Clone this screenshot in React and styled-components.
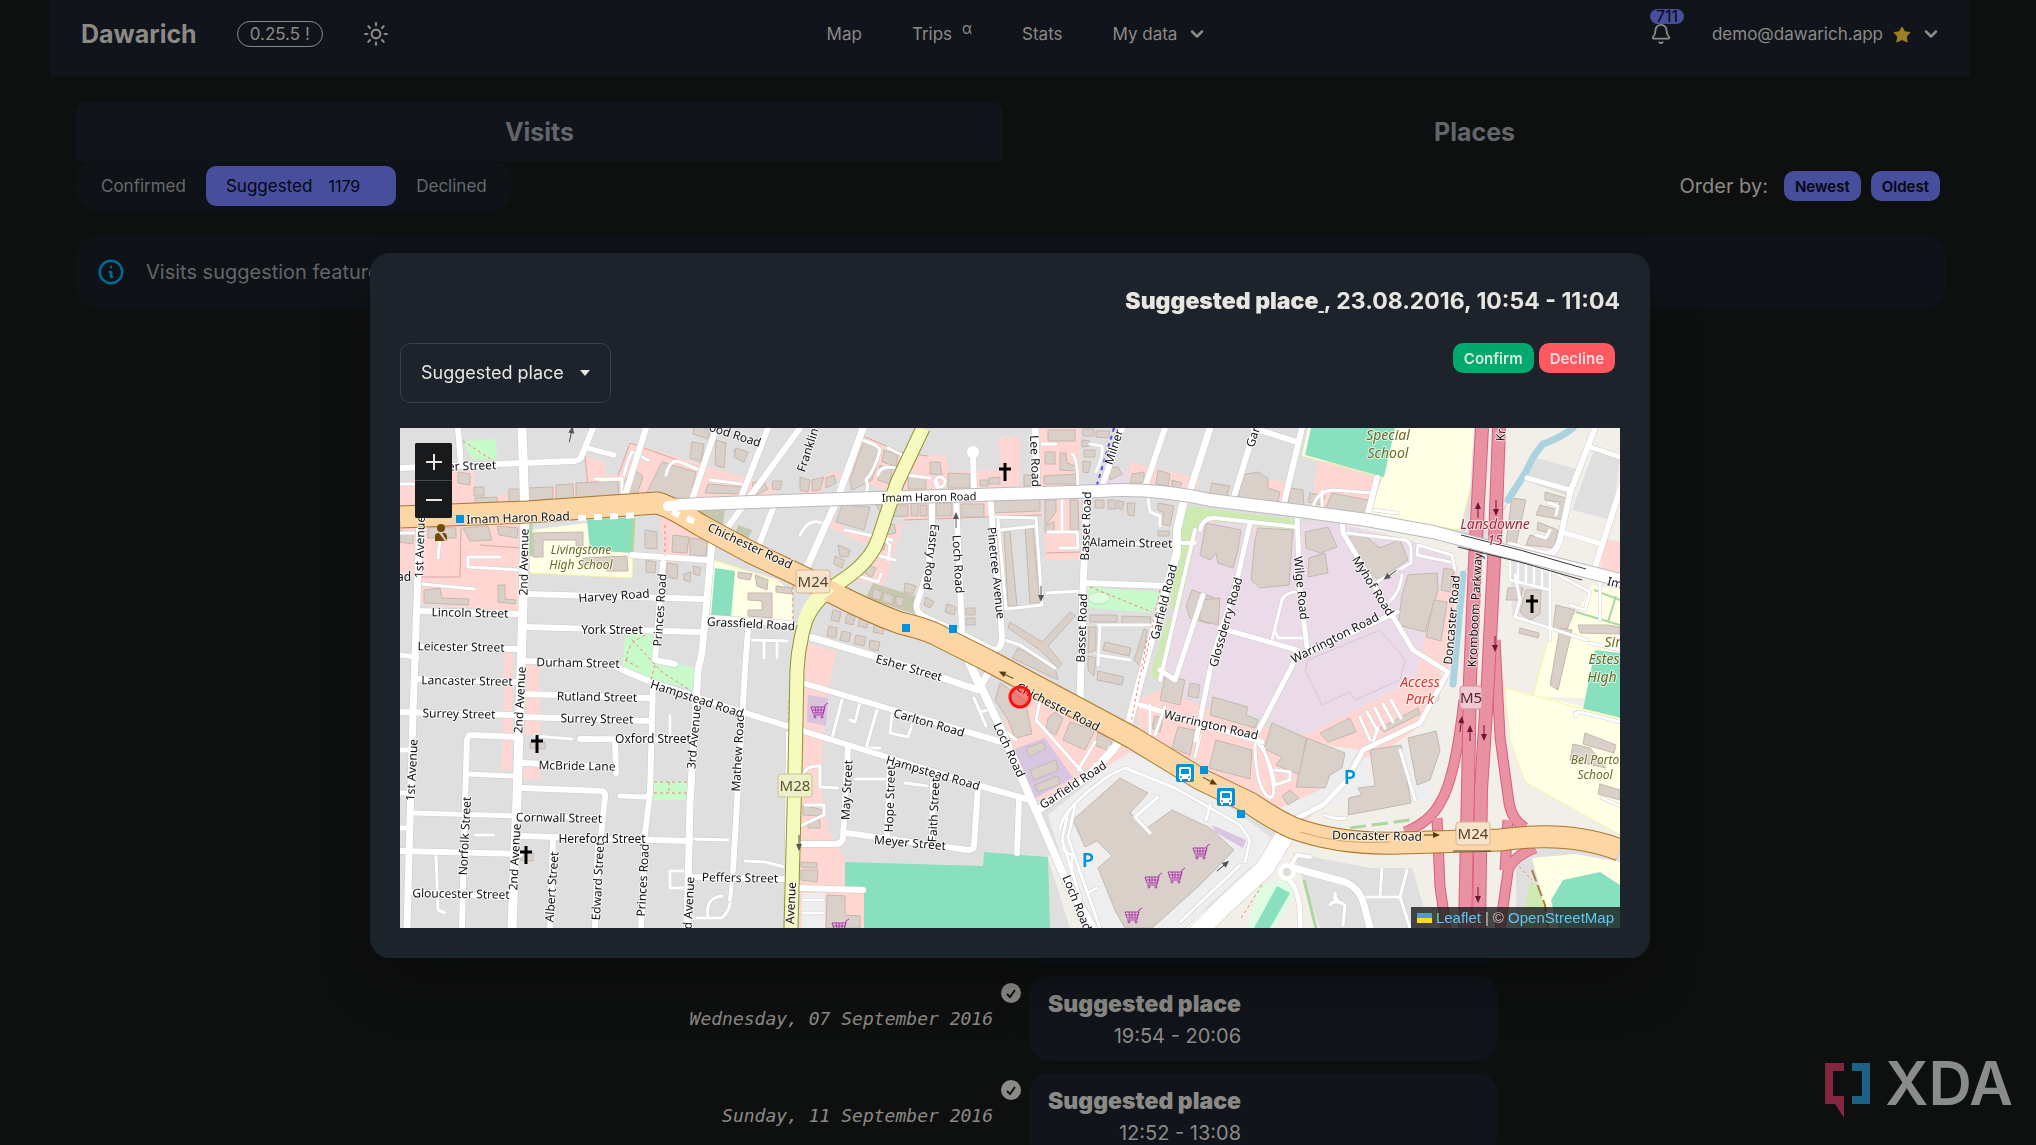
import React from "react";
import styled, { createGlobalStyle } from "styled-components";
import { ChevronDown, Bell, Sun } from "lucide-react";

const GlobalStyle = createGlobalStyle`
  * { box-sizing: border-box; }
  html, body { margin: 0; height: 100%; }
  body {
    background: #0e100f;
    color: #8c8a86;
    font-family: Inter, "Liberation Sans", sans-serif;
    font-size: 20px;
    line-height: 28px;
    overflow: hidden;
  }
  #root { height: 100%; }
  a { color: inherit; text-decoration: none; }
  button, select { font: inherit; color: inherit; border: 0; background: none; padding: 0; margin: 0; }
  ul { list-style: none; margin: 0; padding: 0; }
  h1, h2, h3, p { margin: 0; font-weight: inherit; font-size: inherit; }
`;

/* ---------- page frame ---------- */

const Page = styled.div`
  height: 100%;
  overflow: hidden;
  padding: 0 66px 0 50px;
`;

const Navbar = styled.header`
  display: grid;
  grid-template-columns: 1fr auto 1fr;
  align-items: start;
  height: 76px;
  padding: 19px 29px 0 31px;
  background: #11141a;
  font-size: 17px;
`;

const NavGroup = styled.div`
  display: flex;
  align-items: center;
  gap: ${(p) => p.$gap}px;
  height: 30px;
  justify-content: ${(p) => p.$justify || "flex-start"};
`;

const NavCenter = styled(NavGroup)`
  padding-left: 12px;
`;

const Brand = styled.a`
  font-size: 25px;
  font-weight: 700;
`;

const Version = styled.a`
  display: flex;
  align-items: center;
  height: 26px;
  padding: 0 12px;
  border: 1px solid #8c8a86;
  border-radius: 13px;
`;

const IconButton = styled.button`
  position: relative;
  display: flex;
  cursor: pointer;
`;

const NavLink = styled.a`
  display: flex;
  gap: 10px;
`;

const Alpha = styled.sup`
  font-size: 15px;
  line-height: 18px;
`;

const NavMenuButton = styled.button`
  display: flex;
  align-items: center;
  gap: 10px;
  cursor: pointer;
`;

const Count = styled.span`
  position: absolute;
  left: 0;
  top: -14px;
  padding: 0 6px;
  height: 15px;
  border-radius: 8px;
  background: #474e9c;
  color: #05060f;
  font-size: 16px;
  line-height: 15px;
`;

const Content = styled.main`
  padding: 26px 24px 0 26px;
`;

const Tabs = styled.nav`
  display: grid;
  grid-template-columns: 927fr 943fr;
  height: 59px;
`;

const Tab = styled.a`
  display: flex;
  align-items: center;
  justify-content: center;
  border-radius: 10px 10px 0 0;
  background: ${(p) => (p.$active ? "#11141a" : "transparent")};
  color: #62666b;
  font-size: 25px;
  font-weight: 700;
  line-height: 28px;
`;

const Toolbar = styled.div`
  display: flex;
  justify-content: space-between;
  align-items: center;
  height: 50px;
  padding-right: 6px;
`;

const Filter = styled.ul`
  display: flex;
  padding: 5px;
  border-radius: 20px;
  background: #0f1216;
`;

const FilterLink = styled.a`
  display: flex;
  align-items: center;
  height: 40px;
  padding: 0 20px;
  border-radius: 10px;
  background: ${(p) => (p.$active ? "#474e9c" : "transparent")};
  color: ${(p) => (p.$active ? "#05060f" : "#666a6e")};
  font-size: 17px;
`;

const FilterCount = styled.span`
  padding: 0 16px;
  font-size: 16px;
`;

const Order = styled.div`
  display: flex;
  align-items: center;
  gap: 10px;
`;

const OrderLabel = styled.span`
  padding-right: 6px;
`;

const SmallButton = styled.button`
  height: 30px;
  padding: 0 11px;
  border-radius: 10px;
  background: ${(p) => p.$bg};
  color: ${(p) => p.$fg};
  font-size: 15px;
  font-weight: 600;
  line-height: 32px;
  cursor: pointer;
`;

const Notice = styled.section`
  display: flex;
  align-items: center;
  gap: 20px;
  height: 72px;
  margin-top: 25px;
  padding: 0 20px;
  border-radius: 20px;
  background: #0f1216;
  color: #62666b;
`;

/* ---------- timeline behind the dialog ---------- */

const Timeline = styled.ul`
  display: grid;
  gap: 12px;
  margin-top: 571px;
`;

const Visit = styled.li`
  display: grid;
  grid-template-columns: 1fr 36px 1fr;
  grid-template-rows: 85px;
`;

const VisitDate = styled.time`
  align-self: center;
  text-align: right;
  font: italic 18px/24px "DejaVu Sans Mono", monospace;
`;

const VisitRail = styled.div`
  display: flex;
  flex-direction: column;
  align-items: center;
  gap: 6px;
  padding-top: 7px;
  &::after {
    content: "";
    width: 4px;
    flex: 1;
    background: #0d1014;
  }
`;

const VisitCard = styled.article`
  display: flex;
  width: 468px;
  padding: 13px 19px 8px;
  border-radius: 20px;
  background: #11141a;
  text-align: right;
  line-height: 34px;
`;

const VisitName = styled.h3`
  font-size: 23px;
  font-weight: 900;
  line-height: 30px;
`;

/* ---------- dialog ---------- */

const Overlay = styled.div`
  position: fixed;
  inset: 0;
  display: flex;
  justify-content: center;
  align-items: flex-start;
  padding: 253px 16px 0 0;
`;

const Dialog = styled.section`
  width: 1280px;
  max-width: 92vw;
  padding: 30px;
  border-radius: 20px;
  background: #1d232a;
  color: #e8e6e1;
  box-shadow: 0 30px 60px -15px rgba(0, 0, 0, 0.4);
`;

const DialogTitle = styled.h2`
  text-align: right;
  font-size: 23px;
  font-weight: 700;
  line-height: 36px;
`;

const PlaceName = styled.strong`
  font-weight: 900;
`;

const PlaceLink = styled.a`
  text-decoration: underline;
`;

const DialogTools = styled.div`
  display: flex;
  justify-content: space-between;
  align-items: flex-start;
  margin: 24px 0 25px;
`;

const SelectBox = styled.label`
  position: relative;
  display: flex;
  align-items: center;
`;

const PlaceSelect = styled.select`
  appearance: none;
  height: 60px;
  width: 211px;
  padding: 0 40px 0 20px;
  border: 1px solid #383f47;
  border-radius: 10px;
  font-size: 18px;
`;

const Caret = styled.svg`
  position: absolute;
  right: 21px;
  pointer-events: none;
`;

const Actions = styled.div`
  display: flex;
  gap: 5px;
  padding-right: 5px;
`;

const MapFrame = styled.div`
  position: relative;
  height: 500px;
  overflow: hidden;
  background: #e0dfdf;
`;

const MapCanvas = styled.svg`
  display: block;
  width: 100%;
  height: 100%;
  font-family: "Noto Sans", "Open Sans", sans-serif;
`;

const ZoomControl = styled.div`
  position: absolute;
  left: 15px;
  top: 15px;
  display: grid;
  gap: 1px;
  width: 37px;
  border-radius: 2px;
  overflow: hidden;
  background: #45474a;
`;

const ZoomButton = styled.button`
  display: flex;
  align-items: center;
  justify-content: center;
  height: 37px;
  background: #181a1c;
  cursor: pointer;
`;

const Attribution = styled.div`
  position: absolute;
  right: 0;
  bottom: 0;
  display: flex;
  align-items: center;
  gap: 4px;
  height: 21px;
  padding: 0 6px;
  background: rgba(24, 26, 27, 0.8);
  color: #c8c3bc;
  font: 15px/21px "Liberation Sans", sans-serif;
  a { color: #5cc8f5; }
`;

const Watermark = styled.div`
  position: fixed;
  right: 23px;
  bottom: 20px;
  display: flex;
  align-items: flex-start;
  gap: 14px;
  height: 62px;
  color: #8a8c8b;
  font-size: 60px;
  font-weight: 600;
  line-height: 41px;
`;

/* ---------- map data ---------- */

const areas = [
  ["#f2efe9", "1330,520 1490,550 1475,428 1620,428 1620,928 1070,928 1047,855 1100,858 1160,928 1290,822 1440,700 1440,560"],
  ["#e0dfdf", "1537,458 1580,470 1572,498 1525,480"],
  ["#e0dfdf", "1594,450 1620,458 1612,520 1572,510"],
  ["#e0dfdf", "1293,853 1370,868 1412,868 1430,928 1320,928"],
  ["#e0dfdf", "1516,850 1620,845 1620,928 1516,928"],
  // retail
  ["#ffd6d1", "400,484 454,470 474,472 474,500 530,490 528,510 400,518"],
  ["#ffd6d1", "400,522 527,518 520,612 422,604 418,577 400,575"],
  ["#ffd6d1", "526,488 588,484 585,456 604,462 606,474 618,476 630,443 780,488 760,505 526,512"],
  ["#ffd6d1", "700,470 745,484 738,500 695,500"],
  ["#ffd6d1", "863,436 900,452 928,456 946,456 948,472 1000,470 999,437 1020,437 1020,486 1035,486 1039,428 1080,428 1080,488 900,496 830,470 820,496 800,492 802,482 824,475 845,480"],
  ["#ffd6d1", "830,520 875,540 905,520 900,505 1040,496 1042,515 904,520 884,586 850,580 868,545 830,528"],
  ["#ffd6d1", "1044,498 1080,498 1080,560 1045,560"],
  ["#ffd6d1", "1130,462 1180,474 1200,480 1195,496 1128,488"],
  ["#ffd6d1", "1260,478 1285,482 1280,508 1255,500"],
  ["#ffd6d1", "1318,460 1375,477 1368,515 1310,508"],
  ["#ffd6d1", "660,516 700,530 710,540 705,562 664,556"],
  ["#ffd6d1", "505,650 513,650 511,770 502,770"],
  ["#ffd6d1", "527,664 539,666 540,735 525,735"],
  ["#ffd6d1", "524,767 541,768 540,779 523,779"],
  ["#ffd6d1", "805,642 836,652 826,700 820,780 828,830 845,858 845,890 865,890 865,928 800,928 800,640"],
  ["#ffd6d1", "1000,700 1020,680 1135,750 1100,775 1050,800 1035,800 1010,740"],
  ["#ffd6d1", "1137,700 1160,690 1255,725 1300,735 1420,672 1450,676 1415,730 1350,775 1298,830 1140,745"],
  ["#ffd6d1", "1438,570 1458,567 1450,670 1415,680"],
  ["#ffd6d1", "1603,538 1620,542 1620,575 1600,572"],
  // industrial
  ["#ebdbe8", "1200,518 1345,525 1410,540 1455,560 1435,600 1415,680 1307,735 1262,717 1160,690 1187,560"],
  ["#ebdbe8", "1112,465 1128,470 1124,488 1108,486"],
  ["#d8c5e2", "1012,750 1045,738 1073,778 1032,800"],
  ["#d9c3dd", "808,695 828,698 826,726 807,722"],
  // grass
  ["#cdebb0", "1182,505 1297,520 1297,530 1200,520 1180,610 1170,610 1177,545"],
  ["#cdebb0", "1168,618 1178,618 1158,682 1150,675"],
  ["#cdebb0", "1531,880 1545,900 1548,928 1520,928"],
  ["#c5c8ae", "688,510 725,508 723,524 704,520"],
  ["#c5c8ae", "738,525 752,530 746,543 734,538"],
  ["#c5c8ae", "873,583 915,596 917,615 866,598"],
  ["#c8facc", "463,441 496,439 497,460 472,459"],
  ["#c8facc", "625,636 652,632 655,660 695,668 692,690 622,670"],
  ["#c8facc", "653,781 688,781 688,800 653,800"],
  ["#c8facc", "1087,587 1162,592 1152,613 1088,608"],
  ["#dffce2", "1258,885 1285,880 1295,890 1275,928 1248,928"],
  // schools
  ["#ffffe5", "530,530 635,517 632,578 530,573"],
  ["#ffffe5", "713,560 778,580 792,594 793,622 710,616"],
  ["#ffffe5", "1308,428 1474,428 1470,490 1460,530 1370,515 1383,475 1302,456"],
  ["#ffffe5", "1592,585 1620,590 1620,700 1533,696 1552,625 1578,612"],
  ["#ffffe5", "1505,688 1620,715 1620,835 1525,782 1510,740"],
  ["#ffffe5", "1532,858 1575,854 1620,862 1620,928 1550,928"],
  // pitches
  ["#88e0be", "587,520 635,517 631,553 590,550"],
  ["#88e0be", "715,568 735,571 731,618 711,616"],
  ["#88e0be", "1311,428 1395,428 1384,477 1305,455"],
  ["#88e0be", "1595,650 1620,653 1620,718 1583,709"],
  ["#88e0be", "1563,880 1600,872 1620,885 1620,928 1558,928 1551,900"],
  ["#88e0be", "845,862 983,866 984,852 1048,857 1050,928 864,928 864,893 845,889"],
  ["#88e0be", "1277,886 1290,893 1270,928 1254,928"],
  // parking
  ["#eeeeee", "1048,815 1110,765 1130,752 1200,785 1250,822 1272,838 1245,873 1180,928 1095,928 1065,870"],
  ["#eeeeee", "1326,745 1360,750 1345,800 1280,820 1275,810 1320,790"],
  ["#eeeeee", "1345,805 1430,800 1446,728 1420,732 1400,745 1360,760"],
  ["#eeeeee", "802,893 825,893 825,928 802,928"],
  ["#e3e3e3", "1510,552 1550,575 1550,628 1512,615"],
  ["#d8c5e2", "1212,825 1246,840 1243,848 1215,832"],
];

const buildings = [
  "458,472 470,474 470,485 458,483", "474,487 484,487 484,496 474,496", "475,498 497,497 498,508 475,508",
  "509,489 521,489 521,505 509,505", "527,488 553,487 553,498 540,500 538,505 527,505", "556,485 573,484 574,503 556,503",
  "576,483 618,481 619,499 576,502", "625,480 634,470 643,476 638,492 626,492",
  "662,462 696,472 690,498 644,498", "694,425 710,430 708,439 693,434", "692,442 704,444 701,462 690,458",
  "716,440 726,443 724,468 715,465", "736,448 748,452 744,462 734,457",
  "708,484 742,487 743,494 705,493", "752,483 762,479 768,489 756,495", "773,481 782,481 780,490 772,489",
  "800,477 810,480 808,492 800,490", "812,480 824,477 820,490 812,491", "826,478 834,475 836,483 826,488",
  "463,528 488,526 492,540 470,541", "428,527 456,528 456,538 428,538", "497,526 518,528 517,538 499,535",
  "400,530 413,535 413,544 400,542", "424,590 440,588 442,598 469,599 468,605 424,603", "498,585 505,585 505,599 516,600 515,604 498,602",
  "533,533 583,532 583,546 576,546 576,540 543,540 543,557 533,557", "583,558 627,556 628,571 607,571 606,565 583,565",
  "645,530 657,532 657,549 645,548", "646,560 656,562 655,573 646,572", "673,535 689,537 687,553 672,552", "690,538 707,540 706,556 690,555",
  "667,563 678,565 677,579 667,577", "684,574 691,572 690,582 684,580", "693,566 701,568 699,576 694,574",
  "738,572 752,574 750,580 738,578", "755,575 768,580 767,590 757,586", "748,593 772,593 772,618 748,616 748,610 762,610 762,601 748,600",
  "776,586 792,588 791,594 776,592",
  "864,440 880,446 878,462 872,480 852,490 850,480", "884,450 898,455 896,466 882,462", "880,465 892,470 890,484 878,480",
  "908,476 926,477 926,489 908,489", "930,462 940,462 942,475 930,474", "948,473 970,474 970,488 948,488",
  "980,480 988,480 988,486 980,486", "989,478 1000,477 1000,484 989,484", "1024,475 1031,475 1031,486 1024,486",
  "1048,430 1075,430 1075,441 1048,441", "1045,452 1055,452 1055,464 1045,464", "1060,453 1066,453 1067,463 1076,466 1076,471 1060,470",
  "1044,476 1076,474 1076,484 1044,484", "1083,429 1094,429 1094,436 1083,436", "1096,431 1110,431 1108,438 1096,437",
  "1082,440 1090,441 1090,446 1082,447", "1084,450 1095,450 1095,457 1084,457", "1083,461 1091,462 1088,473 1083,472",
  "1109,467 1118,467 1122,474 1110,480", "1132,474 1144,472 1144,482 1130,484", "1158,470 1170,474 1168,486 1156,484", "1172,480 1182,483 1178,490 1172,489",
  "842,505 870,507 864,530 836,522", "876,505 908,505 908,516 884,517", "911,503 918,503 918,516 911,516", "920,505 927,505 927,516 920,516",
  "936,503 952,503 952,516 936,516", "961,504 984,504 984,517 961,517", "992,501 1040,499 1040,511 992,513",
  "884,526 894,524 896,533 886,535", "878,538 886,542 884,550 876,548",
  "1045,500 1056,500 1056,512 1046,525 1054,522 1054,532 1045,532", "1070,500 1078,500 1079,530 1070,530",
  "1004,532 1010,532 1017,606 1008,606", "1025,528 1033,528 1040,603 1030,603",
  "1095,500 1104,500 1104,508 1095,508", "1108,500 1116,500 1116,509 1108,509", "1118,500 1124,502 1122,510 1118,508", "1127,503 1135,503 1134,516 1128,515",
  "1158,503 1174,506 1170,526 1162,524 1164,513 1158,510", "1158,531 1169,531 1169,536 1158,536",
  "838,545 850,550 848,557 840,556", "835,556 844,560 842,568 834,564", "862,562 876,568 872,577 866,574",
  "874,588 882,592 880,600 872,598", "884,592 894,596 892,604 882,602", "896,596 904,598 902,606 896,605", "905,583 916,586 913,594 904,592",
  "926,597 934,602 930,608 924,605", "947,604 956,607 954,615 945,612", "966,608 975,608 975,615 966,615", "966,618 975,618 975,625 966,625",
  "833,610 841,612 839,622 831,620", "847,614 855,616 853,625 845,623", "860,618 869,620 867,628 858,626", "875,623 885,625 883,634 873,632",
  "829,626 837,628 836,638 827,636", "842,631 851,633 849,642 840,640", "856,635 866,637 864,646 854,644", "870,640 880,642 878,651 869,649",
  "1010,622 1042,642 1070,612 1075,616 1048,646 1062,664 1058,668 1040,650 1008,628", "1018,648 1055,668 1058,680 1012,658",
  "1090,615 1117,615 1117,622 1090,622", "1122,616 1151,617 1150,625 1122,624", "1089,627 1096,627 1096,650 1088,653",
  "1105,642 1131,648 1129,656 1103,650", "1098,671 1124,677 1122,685 1097,680", "1144,629 1147,630 1142,668 1134,660", "1088,656 1096,658 1094,676 1088,670",
  "1192,590 1215,598 1210,624 1190,618 1186,606",
  "1206,523 1241,530 1238,550 1233,568 1218,563 1216,553 1210,560 1200,555", "1258,528 1293,530 1289,585 1260,588 1251,580 1255,540",
  "1305,532 1328,527 1337,547 1320,553 1306,548", "1309,558 1325,553 1328,573 1308,577",
  "1348,538 1360,532 1380,548 1400,540 1408,560 1378,580 1363,565",
  "1408,575 1437,573 1438,590 1425,632 1398,625 1402,595", "1434,600 1447,602 1441,641 1426,637", "1444,568 1454,570 1450,592 1441,590",
  "1200,600 1220,598 1218,625 1200,620",
  "1243,475 1258,472 1268,478 1268,488 1280,492 1278,502 1238,498", "1212,483 1230,486 1226,497 1210,493", "1291,488 1303,490 1304,507 1288,504",
  "1310,493 1325,496 1322,505 1308,502", "1332,493 1368,500 1365,515 1325,510", "1512,498 1526,500 1516,544 1506,542",
  "1545,492 1566,498 1563,520 1536,515 1540,505 1558,510 1560,502 1545,500", "1538,522 1558,530 1554,548 1526,545 1530,535 1548,540 1548,533 1537,530",
  "1508,588 1523,588 1520,600 1506,600", "1526,590 1541,590 1540,614 1530,620 1520,612", "1556,605 1575,610 1566,632 1553,628",
  "1520,628 1539,633 1538,638 1519,633", "1560,628 1572,630 1558,690 1550,685", "1578,625 1608,625 1620,627 1620,634 1580,633",
  "1213,697 1248,707 1246,715 1258,720 1255,728 1210,715", "1216,740 1252,750 1250,779 1209,768",
  "1272,723 1306,738 1300,775 1276,765 1282,757 1264,749", "1307,738 1345,753 1342,768 1330,775 1325,788 1296,787",
  "1320,733 1350,718 1356,732 1328,742", "1380,728 1418,708 1420,714 1384,732",
  "1370,750 1401,745 1411,803 1348,815 1349,798 1362,795 1358,788 1375,786", "1408,738 1436,731 1440,750 1430,780 1417,785",
  "1282,796 1290,790 1299,798 1288,805",
  "1120,778 1148,793 1130,813 1147,828 1172,810 1210,828 1234,850 1200,885 1152,928 1125,928 1115,910 1098,868 1112,856 1097,841 1085,847 1073,820",
  "1000,683 1025,700 1032,734 1015,738 1008,720 995,700", "1048,718 1055,712 1063,718 1056,735 1046,730", "1070,722 1095,730 1085,750 1063,740",
  "1098,732 1112,742 1108,750 1096,746", "1026,748 1042,742 1046,748 1030,757", "1030,770 1056,760 1058,770 1034,780", "1035,785 1058,776 1060,784 1038,792",
  "1165,676 1185,680 1180,705 1160,700", "1190,683 1200,685 1198,698 1188,696", "1178,727 1195,730 1190,755 1172,748", "1155,716 1163,718 1160,732 1152,728",
  "801,862 817,863 817,868 801,867", "801,870 818,870 817,882 801,880", "803,805 823,810 822,816 803,815", "808,820 820,820 820,828 808,828",
  "827,895 845,896 845,915 860,916 860,928 826,928",
  "1585,733 1616,745 1614,753 1583,744", "1573,744 1590,748 1606,768 1570,760", "1600,784 1620,790 1620,800 1598,794",
  "530,742 545,742 545,749 530,748", "520,853 533,853 533,861 520,860",
];

const thinRoads = [
  "M400 484H416", "M595 479H622V512", "M632 452Q628 458 624 475", "M632 452L648 460", "M666 475Q670 458 680 462L700 470", "M710 480L742 484",
  "M600 480L622 479", "M436 855L438 910L445 913", "M475 835H494", "M535 736L572 739", "M670 715V735", "M693 839L728 840",
  "M690 918H722Q732 908 730 898", "M708 916Q705 898 722 896", "M670 871H685", "M670 871V888H685", "M745 861L765 862L785 867",
  "M752 640L787 641M764 642V658M777 642V658", "M468 557H500M468 557V567L520 570", "M422 584L474 589", "M400 533H425M440 538L438 558",
  "M862 440Q880 446 880 450Q875 470 866 480Q870 488 865 493", "M888 448L912 460", "M878 475Q880 465 895 468", "M906 475L930 478M937 482V495",
  "M940 482m-5 0a5 5 0 1 0 10 0a5 5 0 1 0-10 0", "M992 517L1036 518L1042 605L1006 609L998 520M1000 530L1036 526",
  "M1062 498V532M1048 532H1077L1078 548H1060", "M1042 444H1056M1072 454Q1078 456 1078 495", "M1090 444L1102 446Q1104 455 1096 472",
  "M1148 498L1150 512L1160 516V526", "M1047 593L1080 591", "M1005 640L1020 645L1055 668", "M1098 625H1152M1100 626L1098 665M1098 655L1130 660",
  "M845 530L892 540M880 535L890 545L888 560M880 556L895 560", "M858 576L878 582L881 574", "M800 535Q810 515 826 525",
  "M1322 491V508M1313 508Q1316 492 1332 490L1373 493M1372 510L1397 513", "M1347 533L1405 540Q1411 542 1411 550V563L1375 583", "M1272 640L1282 600Q1285 592 1302 591M1275 631L1278 638H1307", "M1402 575Q1400 595 1385 605",
  "M1455 570L1452 555L1418 545L1417 555L1450 562", "M1510 552V580L1550 590M1518 560V580M1526 562V582M1534 564V584M1542 566V586M1550 565V640",
  "M1515 575L1520 600L1515 617L1587 640M1590 643L1620 650", "M1558 575L1590 592L1585 610L1570 605", "M1600 580V620M1575 713Q1575 720 1578 712Q1582 712 1620 722", "M1548 503L1558 506L1556 515M1536 535L1546 538L1550 530",
  "M1602 798L1620 806", "M1335 900V893Q1335 902 1345 905L1343 925M1330 905Q1333 900 1342 903", "M1362 897H1400L1407 870M1380 896L1382 868M1400 897L1410 928",
  "M1018 684L1040 700L1036 720L1085 775", "M1000 727L1016 740M1078 770L1095 742M1110 747L1100 770", "M1060 690L1080 700",
  "M1150 705V740M1165 707L1155 735M1200 735L1195 757", "M1255 740Q1255 790 1270 798Q1280 795 1262 745M1255 740Q1270 755 1275 785L1290 780V772L1275 770",
  "M1347 780Q1355 750 1375 745M1373 742L1378 728", "M1324 815Q1335 820 1345 818", "M1400 750L1415 800", "M1360 717L1370 740M1367 712L1377 730M1375 708L1385 728M1383 704L1393 722M1391 700L1401 718",
  "M803 775Q806 765 820 766V787L838 788M800 826L824 815V805H805", "M855 779H885M905 783L927 786M877 710L866 748L880 748M860 702L855 722L850 720M892 714L890 733L908 737L912 725",
  "M842 700L832 738", "M974 698L986 726M980 712L988 710", "M803 900H823M803 913H823", "M1060 830Q1060 810 1110 775L1125 768L1175 788L1205 805L1240 825L1250 840L1245 862",
  "M1068 812L1062 840L1090 928M1075 806L1068 838L1100 928", "M1064 845Q1060 850 1072 855V870", "M1180 922L1240 865M1188 928L1250 870M1135 817L1150 833M1158 797L1135 817", "M1087 893L1097 888M1206 820L1210 805",
];

const roads = [
  [6, "M458 428L461 466"], [6, "M400 468L575 461Q581 460 582 455L593 428"], [5, "M587 448L614 455"],
  [7, "M420 515L417 600L413 713L410 820L407 928"], [9, "M522 428L525 512L523 600L521 670L517 797L513 900L512 928"],
  [6, "M418 611L517 614"], [6, "M527 594L703 599"], [6, "M527 627L700 632"], [6, "M418 647L517 649"], [6, "M415 679L517 682"],
  [6, "M527 661L612 664Q620 670 655 683L745 713L800 730L890 758L977 785L1030 800"],
  [6, "M663 563L655 660L675 664"], [6, "M653 683L650 793L645 833L641 928"], [6, "M632 555L707 560"],
  [7, "M712 543L702 653L698 670L690 803L687 928"], [6, "M710 618L793 624"], [6, "M748 630L745 670L733 870"], [4, "M733 870L730 900"],
  [6, "M523 694L650 698"], [6, "M400 712L513 715"], [6, "M523 717L650 721"], [6, "M580 739L690 740"], [6, "M615 740L616 773"],
  [6, "M517 737L471 735Q468 735 467 740L465 803L462 928"], [6, "M523 763L613 767"], [5, "M468 774L513 776"], [6, "M523 788L601 791Q606 792 605 797L600 847"],
  [5, "M413 813L597 818"], [6, "M522 836L690 841"], [6, "M400 851L520 854"], [6, "M410 892L507 897"], [6, "M553 840L550 928"], [6, "M598 840L595 928"],
  [5, "M620 796L645 797Q650 796 650 790"], [6, "M688 877L785 879"], [4, "M788 733L786 928"], [5, "M400 655L417 657"], [5, "M400 750H412M400 793H411M400 828H410"],
  [6, "M646 428L622 505"], [6, "M716 428L692 500"], [6, "M768 428L740 500"], [6, "M800 428L722 535M775 503L757 550"],
  [7, "M863 428L837 500L807 567"], [6, "M932 498V530L928 570L917 603Q915 612 923 616L960 633L993 650Q1002 650 1002 637L1000 607L990 497"],
  [6, "M956 497L962 630"], [6, "M973 453L974 493"], [7, "M1035 428L1037 490"], [7, "M1087 493L1083 590L1080 700"], [6, "M1122 428L1102 487"],
  [6, "M1165 428L1145 487"], [7, "M1210 428L1187 500"], [8, "M1184 500L1177 530V553L1153 633L1143 670L1127 730L1113 750L1087 777L1038 810"],
  [4, "M1090 543H1195"], [6, "M1085 583L1167 586"], [5, "M1203 595L1175 680L1160 670"], [4, "M1195 530L1160 680"],
  [7, "M810 637L880 658L940 677L978 690L990 670"], [6, "M967 660L980 690"], [8, "M973 670L1000 727L1030 797L1067 883L1093 928"],
  [6, "M803 683L900 712L1005 743"], [6, "M848 747L843 838Q842 844 835 844H800"], [6, "M847 833L968 850Q974 850 974 845L978 787"],
  [6, "M890 760L887 837"], [6, "M933 780L932 840"], [6, "M1019 800L1017 853"], [6, "M800 888L863 890"],
  [6, "M1255 428L1233 500"], [6, "M1302 428L1283 507"], [6, "M1253 428L1297 442"], [6, "M1377 478L1367 517"],
  [4, "M1200 530Q1203 517 1215 518L1297 527"], [5, "M1250 523L1237 580L1212 660L1196 740"], [5, "M1297 515L1300 590L1307 648"],
  [5, "M1342 520L1343 533L1387 607L1413 650L1448 672L1420 723L1363 750L1347 780L1323 805L1293 820"],
  [5, "M1220 628L1297 650M1297 658L1397 612M1297 655L1290 670L1255 737"], [5, "M1140 705L1262 742"],
  [6, "M1595 428L1570 493L1560 540Q1555 556 1545 554L1510 545"], [5, "M1590 447L1620 457"], [5, "M1527 478L1570 490"], [6, "M1622 484L1593 573"], [5, "M1562 532L1598 543"],
  [18, "M1288 830L1265 868L1225 905L1190 940"], [7, "M1290 867L1345 882Q1360 888 1364 905L1370 928"], [5, "M1287 878Q1302 890 1300 928"], [4, "M1287 872L1297 855L1310 857"],
];

const IMAM = "M664 506L700 504L810 500L977 495L1100 491Q1150 487 1210 500L1300 511L1367 520L1433 532L1490 547L1553 563L1620 580";
const M24 = "M400 517L527 512L657 503Q670 506 700 525L750 552L813 582L833 593Q870 612 900 623Q930 630 943 638L987 660L1077 708L1133 738L1200 779L1250 803Q1275 820 1293 828Q1340 845 1400 843L1500 840Q1570 830 1620 850";
const M28 = "M923 428L897 483L878 540Q870 562 843 580Q815 598 806 620Q798 645 797 670L795 770L791 928";
const KROM_L = "M1482 428L1476 540L1470 680L1468 790L1465 928";
const KROM_R = "M1499 428L1495 540L1488 680L1481 790L1479 928";
const SLIPS = "M1464 700Q1455 780 1440 803Q1430 822 1405 832M1495 640L1500 737L1509 803Q1512 820 1525 828M1437 818L1440 887L1446 928M1535 848Q1510 858 1508 872L1500 928M1508 820L1505 870";
const RIVER = "M1573 428Q1560 438 1543 444Q1533 455 1526 472L1508 500";

const footpaths = [
  "M463 441L495 462", "M665 525V556", "M627 660Q625 645 645 635M632 640L662 672L690 690M625 660L640 668M655 665L650 683",
  "M654 782H687M654 793H687M669 782V793", "M1090 587L1152 612", "M1147 640L1130 728M1160 590L1143 670", "M1515 862L1532 880", "M1262 885L1240 920",
  "M400 522H418", "M793 580V620M789 700V722",
];

const labels = [
  ["er Street", 472, 466, -2], ["Imam Haron Road", 518, 518, -2], ["1st Avenue", 420, 547, -88], ["2nd Avenue", 524, 562, -89],
  ["Harvey Road", 614, 596, -4], ["Princes Road", 660, 610, -86], ["Lincoln Street", 470, 613, 1], ["York Street", 612, 630, 0], ["Leicester Street", 461, 647, 1],
  ["Durham Street", 578, 663, 1], ["Grassfield Road", 751, 624, 3], ["Chichester Road", 750, 546, 25], ["ood Road", 735, 435, 18], ["Franklin", 808, 450, -72],
  ["ad", 404, 577, 0], ["Lancaster Street", 467, 681, 1], ["Rutland Street", 597, 697, 1], ["Surrey Street", 459, 714, 1], ["Surrey Street", 597, 719, 1],
  ["2nd Avenue", 520, 700, -87], ["Oxford Street", 653, 739, 0], ["3rd Avenue", 694, 737, -85], ["Mathew Road", 738, 753, -87], ["Hampstead Road", 697, 699, 18],
  ["McBride Lane", 577, 766, 1], ["1st Avenue", 412, 770, -87], ["Norfolk Street", 465, 836, -87], ["2nd Avenue", 515, 857, -87], ["Cornwall Street", 559, 818, 1],
  ["Hereford Street", 602, 839, 0], ["Albert Street", 552, 887, -86], ["Edward Street", 598, 881, -87], ["Princes Road", 643, 880, -87], ["Gloucester Street", 461, 894, 1],
  ["Peffers Street", 740, 878, 1], ["d Avenue", 689, 903, -87], ["Avenue", 791, 903, -87],
  ["Imam Haron Road", 929, 497, -1, 11], ["Eastry Road", 931, 557, 97], ["Loch Road", 958, 564, 87], ["Pinetree Avenue", 996, 573, 84], ["Lee Road", 1035, 461, 88],
  ["Milner", 1114, 447, -72], ["Basset Road", 1086, 526, -88], ["Basset Road", 1082, 628, -88], ["Alamein Street", 1131, 543, 1], ["Garfield Road", 1164, 602, -76],
  ["Esher Street", 909, 668, 16], ["Carlton Road", 929, 723, 16], ["Hampstead Road", 933, 773, 16], ["Loch Road", 1009, 750, 65], ["May Street", 847, 790, -87],
  ["Hope Street", 890, 799, -88], ["Faith Street", 934, 810, -87], ["Meyer Street", 910, 843, 5], ["Garfield Road", 1073, 785, -33], ["Chichester Road", 1058, 707, 27],
  ["Loch Road", 1077, 903, 68], ["Warrington Road", 1211, 725, 13], ["Gar", 1253, 437, -72], ["Glossderry Road", 1226, 622, -74], ["Wilge Road", 1301, 588, 84],
  ["Myhof Road", 1373, 586, 58], ["Warrington Road", 1335, 638, -27], ["Doncaster Road", 1452, 620, -85], ["Kromboom Parkway", 1475, 610, -87], ["Kr", 1501, 435, -86],
  ["Im", 1615, 583, 14], ["Doncaster Road", 1377, 836, 1],
];

const areaLabels = [
  ["Livingstone", 581, 549, "#6b6b20", 12], ["High School", 581, 564, "#6b6b20", 12], ["Special", 1388, 435, "#6b6b20", 14], ["School", 1388, 453, "#6b6b20", 14],
  ["Lansdowne", 1495, 524, "#a5283c", 14], ["15", 1495, 540, "#a5283c", 14], ["Access", 1420, 682, "#d5372b", 14], ["Park", 1420, 699, "#d5372b", 14],
  ["Sim", 1616, 642, "#6b6b20", 14], ["Estes", 1604, 659, "#6b6b20", 14], ["High", 1602, 677, "#6b6b20", 14], ["Bel Porto", 1595, 759, "#6b6b20", 12], ["School", 1595, 774, "#6b6b20", 12],
];

const shields = [
  ["M24", 813, 582, "#f7e3cc", "#d9b88c", "#57422a"], ["M28", 795, 786, "#eff0cb", "#c3c78a", "#55562c"],
  ["M5", 1471, 698, "#efc9d2", "#d98ca2", "#5b2135"], ["M24", 1473, 834, "#f7e3cc", "#d9b88c", "#57422a"],
];

const arrows = [
  [571, 434, -78, "#555"], [956, 520, -90, "#555"], [1041, 594, 90, "#555"], [1006, 675, 205, "#5b3b05"], [1210, 781, 27, "#5b3b05"], [1432, 835, 0, "#5b3b05"],
  [1478, 510, -90, "#6d1434"], [1496, 508, 90, "#6d1434"], [1495, 644, 90, "#6d1434"], [1461, 724, -82, "#6d1434"], [1470, 733, -90, "#6d1434"],
  [1484, 733, 90, "#6d1434"], [1478, 895, 90, "#6d1434"], [1223, 866, -40, "#555"], [1390, 575, 145, "#555"], [799, 843, 90, "#555"],
];

const crosses = [[1005, 472], [1532, 604], [537, 744], [526, 855]];
const stops = [[460, 519], [906, 628], [953, 629], [1204, 770], [1241, 814]];
const buses = [[1185, 773], [1226, 797]];
const carts = [[819, 711], [1201, 852], [1153, 881], [1176, 876], [1133, 916], [840, 927]];
const parkings = [[1088, 860], [1350, 777]];

function CityMap() {
  return (
    <MapCanvas viewBox="400 428 1220 500" preserveAspectRatio="xMidYMid slice" role="img" aria-label="Street map">
      {areas.map(([fill, pts], i) => <polygon key={i} points={pts} fill={fill} />)}
      <g fill="none" stroke="#f7f4a5" strokeWidth="1">
        <polyline points="1302,456 1384,478" /><polyline points="1370,517 1460,530 1470,490" />
        <polyline points="530,573 632,578 635,517" /><polyline points="1505,688 1583,709 1620,718" />
        <polyline points="1505,688 1510,740 1525,782 1620,835" /><polyline points="1533,696 1552,625" />
        <polyline points="714,560 778,582 778,592 792,594" />
      </g>
      <g fill="none" stroke="#d9a9a2" strokeWidth="1">
        <polyline points="585,456 588,486" /><polyline points="618,476 630,443 700,468" /><polyline points="863,436 900,452 928,456" />
        <polyline points="422,577 460,577 461,527" /><polyline points="480,545 520,548" /><polyline points="904,520 1042,515" /><polyline points="1046,553 1080,552" />
      </g>
      <polygon points="1305,670 1308,660 1380,630 1405,660 1400,680 1355,700 1350,692 1322,705" fill="none" stroke="#d6c6d6" />
      <g fill="none" stroke="#abd7a0" strokeWidth="3">
        <path d="M531 523V556M634 518L632 552M587 516H618" /><path d="M1350 828L1410 820" strokeDasharray="16 6" />
        <path d="M1304 880L1316 928" /><path d="M1594 590L1620 600M1576 612L1620 625M1616 596L1608 622" strokeWidth="2" /><path d="M1206 910L1236 884" />
      </g>
      <ellipse cx="1099" cy="598" rx="11" ry="6" fill="#dffce2" stroke="#b7e6bb" />
      <g fill="#aad3df"><circle cx="702" cy="453" r="2" /><circle cx="722" cy="466" r="2" /><circle cx="735" cy="451" r="2" /></g>
      <g fill="#d9d0c9" stroke="#c5b8ad" strokeWidth="1">{buildings.map((b, i) => <polygon key={i} points={b} />)}</g>
      <g fill="none" stroke="#aad3df" strokeLinecap="round">
        <path d={RIVER} strokeWidth="7" /><path d="M1463 574L1453 684" strokeWidth="7" /><path d="M1506 505L1485 545L1463 574" strokeDasharray="5 4" strokeWidth="1" />
      </g>
      <g fill="none" strokeLinecap="round" strokeLinejoin="round">
        {thinRoads.map((d, i) => <path key={i} d={d} stroke="#cfcfcf" strokeWidth="4" />)}
        {thinRoads.map((d, i) => <path key={i} d={d} stroke="#fff" strokeWidth="3" />)}
        {roads.map(([w, d], i) => <path key={i} d={d} stroke="#cdcbc9" strokeWidth={w + 1} />)}
        {roads.map(([w, d], i) => <path key={i} d={d} stroke="#fff" strokeWidth={w} />)}
      </g>
      <circle cx="973" cy="452" r="6" fill="#fff" /><circle cx="1287" cy="872" r="9" fill="#fff" /><circle cx="1287" cy="872" r="4" fill="#e0dcd6" />
      <g fill="none" stroke="#f98072" strokeWidth="1" strokeDasharray="3 3">{footpaths.map((d, i) => <path key={i} d={d} />)}</g>
      <path d="M1114 428L1096 488" fill="none" stroke="#4a4aff" strokeWidth="2" strokeDasharray="4 4" />
      <path d="M1532 870L1545 905L1548 928" fill="none" stroke="#a8803c" strokeWidth="2" strokeDasharray="12 4" />
      <g fill="none" strokeLinejoin="round">
        <path d={SLIPS} stroke="#dc5c82" strokeWidth="11" /><path d={SLIPS} stroke="#e892a2" strokeWidth="9" />
        {[KROM_L, KROM_R].map((d) => <path key={d} d={d} stroke="#dc5c82" strokeWidth="14" />)}
        {[KROM_L, KROM_R].map((d) => <path key={d} d={d} stroke="#e892a2" strokeWidth="12" />)}
        <path d="M1496 428L1495 540L1488 680L1481 790L1479 928" stroke="#c98797" strokeWidth="1" strokeDasharray="1 5" />
        <path d={M28} stroke="#8a9430" strokeWidth="15" />
        <path d={M24} stroke="#a8762a" strokeWidth="23" />
        <path d={IMAM} stroke="#bbb" strokeWidth="14" /><path d={IMAM} stroke="#fff" strokeWidth="12" />
        <path d="M1461 535L1520 550L1586 569M1458 547L1520 562L1582 580" stroke="#333" strokeWidth="1" />
        <path d={M28} stroke="#f7fabf" strokeWidth="13" />
        <path d={M24} stroke="#fcd6a4" strokeWidth="21" />
        <path d="M830 586Q808 602 803 626" stroke="#f7fabf" strokeWidth="13" />
        <path d="M668 506L700 504" stroke="#fff" strokeWidth="10" strokeLinecap="round" />
        <path d="M1300 832Q1340 845 1390 842" stroke="#d6a468" strokeWidth="1" />
        <path d="M578 518L642 515M672 512L700 524" stroke="#fff" strokeWidth="6" strokeDasharray="8 8" />
        <path d="M1453 851H1491M1455 829H1470" stroke="#444" strokeWidth="1" />
      </g>
      {arrows.map(([x, y, r, c], i) => (
        <g key={i} transform={`translate(${x} ${y}) rotate(${r})`}>
          <path d="M-8 0H3" stroke={c} strokeWidth="1" /><polygon points="1,-3 8,0 1,3" fill={c} />
        </g>
      ))}
      {stops.map(([x, y], i) => <rect key={i} x={x - 4} y={y - 4} width="8" height="8" fill="#0092da" />)}
      {buses.map(([x, y], i) => (
        <g key={i} transform={`translate(${x} ${y})`}>
          <rect x="-9" y="-9" width="18" height="18" rx="2" fill="#0092da" />
          <path d="M-6 6V-4Q-6 -6 -4 -6H4Q6 -6 6 -4V6H5V8H3V6H-3V8H-5V6Z" fill="#fff" />
          <rect x="-4" y="-4" width="8" height="5" fill="#0092da" /><circle cx="-4" cy="4" r="1" fill="#0092da" /><circle cx="4" cy="4" r="1" fill="#0092da" />
        </g>
      ))}
      {crosses.map(([x, y], i) => <path key={i} d={`M${x} ${y - 9}V${y + 9}M${x - 6} ${y - 3}H${x + 6}`} stroke="#000" strokeWidth="3" />)}
      {carts.map(([x, y], i) => (
        <g key={i} transform={`translate(${x} ${y})`} fill="none" stroke="#ac39ac" strokeWidth="1">
          <path d="M9 -8L6 -6L4 4H-6M-8 -4H6L4 2H-6Z" /><path d="M-4 -4L-3 2M-1 -4V2M2 -4V2M5 -1H-7" /><circle cx="-4" cy="6" r="1" /><circle cx="3" cy="6" r="1" />
        </g>
      ))}
      <g transform="translate(441 534)" fill="#734a08"><circle cy="-6" r="4" /><path d="M-6 7V2Q-6 -1 -2 -1L4 7Z M1 -1H4Q6 0 6 3V7Z" /></g>
      <g stroke="#fff" strokeOpacity="0.7" strokeWidth="2" strokeLinejoin="round" textAnchor="middle" fill="#111">
        {labels.map(([t, x, y, r, s], i) => (
          <text key={i} transform={`translate(${x} ${y}) rotate(${r})`} y="4" fontSize={s || 12} paintOrder="stroke">{t}</text>
        ))}
        {areaLabels.map(([t, x, y, c, s], i) => (
          <text key={i} x={x} y={y + 5} fontSize={s} fill={c} fontStyle="italic" paintOrder="stroke">{t}</text>
        ))}
      </g>
      {parkings.map(([x, y], i) => <text key={i} x={x} y={y + 7} fontSize="20" fontWeight="600" textAnchor="middle" fill="#0092da">P</text>)}
      {shields.map(([t, x, y, bg, line, fg], i) => (
        <g key={i}>
          <rect x={x - (t.length * 6 - 1)} y={y - 12} width={t.length * 12 - 2} height="23" rx="3" fill={bg} stroke={line} />
          <text x={x} y={y + 5} fontSize="15" textAnchor="middle" fill={fg}>{t}</text>
        </g>
      ))}
      <circle cx="1020" cy="697" r="10" fill="#ff0000" fillOpacity="0.4" stroke="#ff1010" strokeWidth="3" />
    </MapCanvas>
  );
}

/* ---------- small drawings ---------- */

const Star = () => (
  <svg width="18" height="17" viewBox="0 0 18 17" fill="#9c8023" stroke="#9c8023" strokeLinejoin="round" aria-hidden="true">
    <path d="M9 1L11.6 5.8L17 6.5L13.3 10.5L14.2 16L9 13.5L3.8 16L4.7 10.5L1 6.5L6.4 5.8Z" />
  </svg>
);

const InfoIcon = () => (
  <svg width="30" height="30" viewBox="0 0 24 24" fill="none" stroke="#006a94" strokeWidth="2" strokeLinecap="round" strokeLinejoin="round" aria-hidden="true">
    <path d="M13 16h-1v-4h-1m1-4h.01M21 12a9 9 0 11-18 0 9 9 0 0118 0z" />
  </svg>
);

const CheckMark = () => (
  <svg width="20" height="20" viewBox="0 0 20 20" aria-hidden="true">
    <circle cx="10" cy="10" r="10" fill="#8c8a86" />
    <path d="M6 11L9 14L14 7" fill="none" stroke="#0e100f" strokeWidth="2" />
  </svg>
);

const Sign = ({ plus }) => (
  <svg width="18" height="18" viewBox="0 0 18 18" stroke="#e8e6e1" strokeWidth="2" aria-hidden="true">
    <path d={plus ? "M1 9H17M9 1V17" : "M1 9H17"} />
  </svg>
);

const visits = [
  { date: "", time: "" },
  { date: "Wednesday, 07 September 2016", time: "19:54 - 20:06" },
  { date: "Sunday, 11 September 2016", time: "12:52 - 13:08" },
];

export default function App() {
  return (
    <>
      <GlobalStyle />
      <Page>
        <Navbar>
          <NavGroup $gap={40}>
            <Brand href="#">Dawarich</Brand>
            <Version href="#">0.25.5 !</Version>
            <IconButton aria-label="Toggle theme"><Sun size={26} strokeWidth={2} /></IconButton>
          </NavGroup>
          <NavCenter $gap={50}>
            <NavLink href="#">Map</NavLink>
            <NavLink href="#">Trips<Alpha>α</Alpha></NavLink>
            <NavLink href="#">Stats</NavLink>
            <NavMenuButton>My data<ChevronDown size={20} strokeWidth={3} /></NavMenuButton>
          </NavCenter>
          <NavGroup $gap={40} $justify="flex-end">
            <IconButton aria-label="Notifications"><Bell size={22} /><Count>711</Count></IconButton>
            <NavMenuButton>demo@dawarich.app<Star /><ChevronDown size={20} strokeWidth={3} /></NavMenuButton>
          </NavGroup>
        </Navbar>
        <Content>
          <Tabs>
            <Tab href="#" $active>Visits</Tab>
            <Tab href="#">Places</Tab>
          </Tabs>
          <Toolbar>
            <Filter>
              <li><FilterLink href="#">Confirmed</FilterLink></li>
              <li><FilterLink href="#" $active>Suggested<FilterCount>1179</FilterCount></FilterLink></li>
              <li><FilterLink href="#">Declined</FilterLink></li>
            </Filter>
            <Order>
              <OrderLabel>Order by:</OrderLabel>
              <SmallButton $bg="#474e9c" $fg="#05060f">Newest</SmallButton>
              <SmallButton $bg="#474e9c" $fg="#05060f">Oldest</SmallButton>
            </Order>
          </Toolbar>
          <Notice><InfoIcon /><p>Visits suggestion feature</p></Notice>
          <Timeline>
            {visits.map((v, i) => (
              <Visit key={i}>
                <VisitDate>{v.date}</VisitDate>
                <VisitRail><CheckMark /></VisitRail>
                <VisitCard>
                  {v.date && <div><VisitName>Suggested place</VisitName><p>{v.time}</p></div>}
                </VisitCard>
              </Visit>
            ))}
          </Timeline>
        </Content>
      </Page>
      <Overlay>
        <Dialog role="dialog" aria-labelledby="visit-title">
          <DialogTitle id="visit-title">
            <PlaceName>Suggested place</PlaceName><PlaceLink href="#">&nbsp;</PlaceLink>, 23.08.2016, 10:54 - 11:04
          </DialogTitle>
          <DialogTools>
            <SelectBox>
              <PlaceSelect aria-label="Place"><option>Suggested place</option></PlaceSelect>
              <Caret width="10" height="6" viewBox="0 0 10 6"><path d="M0 0H10L5 6Z" fill="#e8e6e1" /></Caret>
            </SelectBox>
            <Actions>
              <SmallButton $bg="#00a96e" $fg="#dce9e2">Confirm</SmallButton>
              <SmallButton $bg="#ff5861" $fg="#f3dedb">Decline</SmallButton>
            </Actions>
          </DialogTools>
          <MapFrame>
            <CityMap />
            <ZoomControl>
              <ZoomButton aria-label="Zoom in"><Sign plus /></ZoomButton>
              <ZoomButton aria-label="Zoom out"><Sign /></ZoomButton>
            </ZoomControl>
            <Attribution>
              <svg width="15" height="10" viewBox="0 0 15 10" aria-hidden="true"><path fill="#5595e5" d="M0 0H15V5H0Z" /><path fill="#ffd91a" d="M0 5H15V10H0Z" /></svg>
              <a href="#">Leaflet</a><span>|</span><span>© <a href="#">OpenStreetMap</a></span>
            </Attribution>
          </MapFrame>
        </Dialog>
      </Overlay>
      <Watermark>
        <svg width="46" height="56" viewBox="0 0 46 56" aria-hidden="true">
          <path d="M0 0H19V8H8V33H19V55L10 41H0Z" fill="#83263f" />
          <path d="M27 0H45V41H27V33H37V8H27Z" fill="#1c6286" />
        </svg>
        <span>XDA</span>
      </Watermark>
    </>
  );
}
